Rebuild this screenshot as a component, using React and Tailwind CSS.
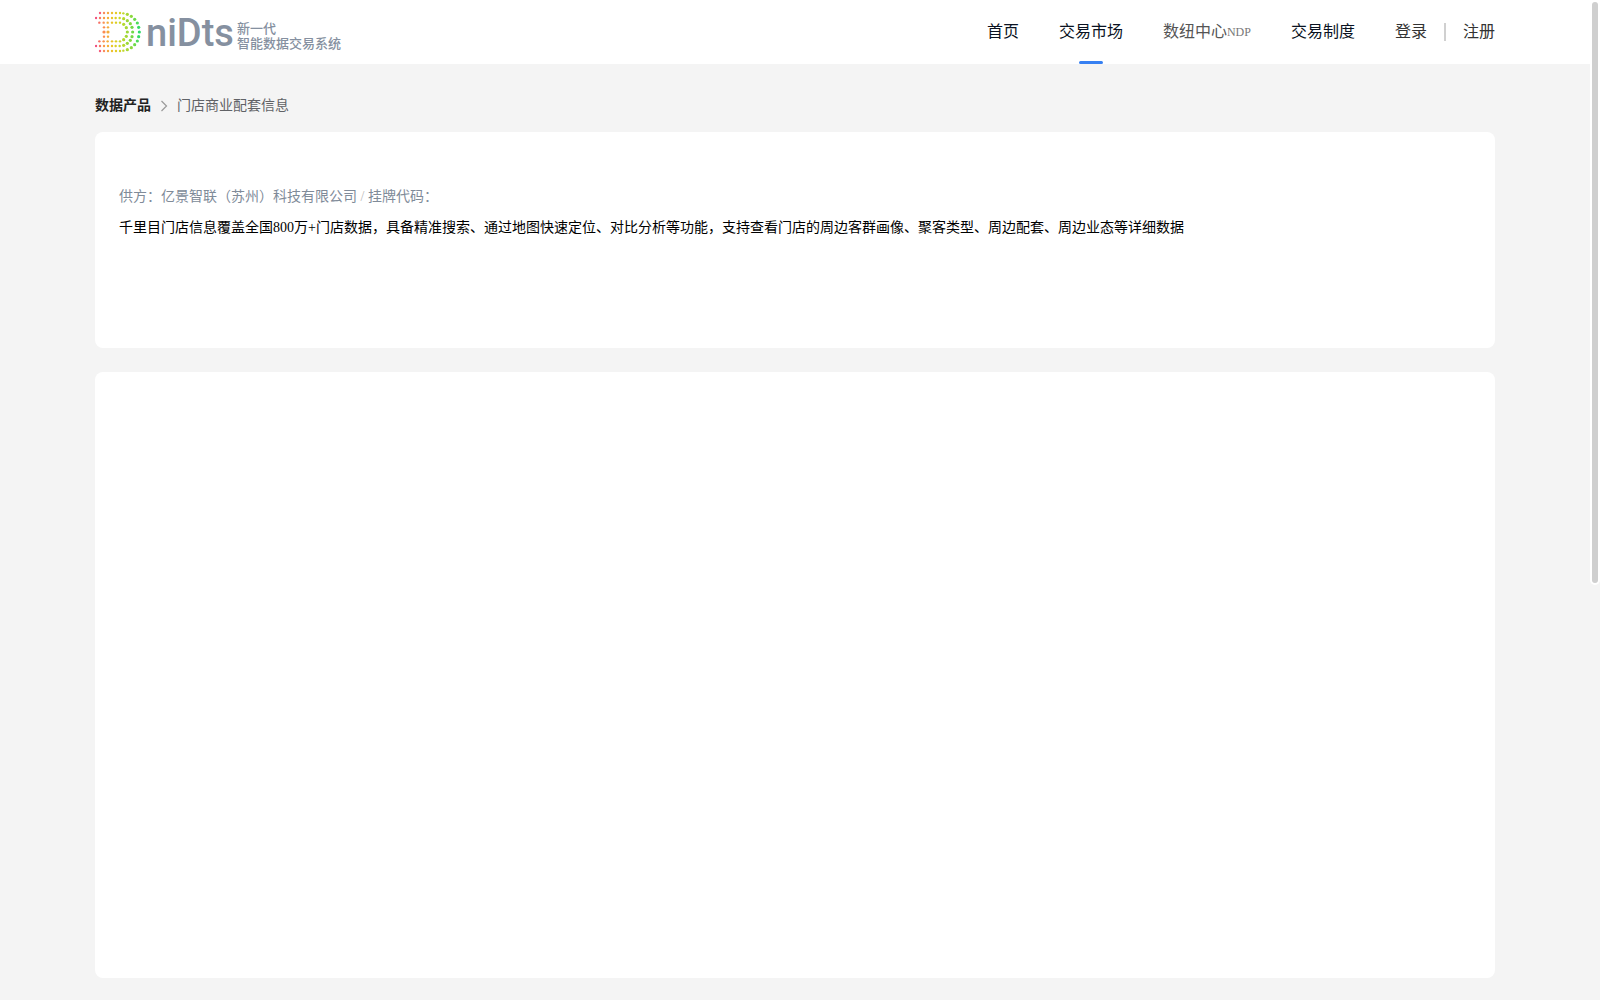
const NAV_ITEMS = [
  { label: '首页' },
  { label: '交易市场', active: true },
  { label: '数纽中心', suffix: 'NDP', muted: true },
  { label: '交易制度' },
];

// upper half of the dotted "D", mirrored around y = 72
const DOTS = [
  [24, 15, '#f45d7c'], [36, 15, '#f98a5b'], [48, 15, '#f6a83e'], [60, 15, '#eebf2c'], [72, 15, '#e3cb24'], [84, 15, '#d3d426'], [94, 16, '#c0d72c'],
  [106, 19, '#a8d833'], [118, 25, '#8cd83d'], [128, 34, '#6cda49'], [136, 45, '#4ddc58'], [140, 58, '#36dc63'],
  [12, 30, '#f0507e'], [24, 30, '#f8775f'], [36, 30, '#f99a48'], [48, 30, '#f5b235'], [60, 30, '#e9c626'], [71, 30, '#dccf22'], [83, 30, '#c9d727'],
  [95, 32, '#b5d92e'], [106, 38, '#9bd736'], [115, 47, '#85d83e'], [120, 58, '#74d845'],
  [22, 44, '#f67065'], [35, 44, '#f98f50'], [47, 44, '#f4ae38'], [60, 44, '#e9c328'], [72, 44, '#dacf22'], [84, 44, '#c9d727'],
  [95, 49, '#b4d92e'], [103, 59, '#a3d833'],
  [36, 58, '#fb8b50'], [48, 58, '#f4ac3a'],
];

const CENTER_DOTS = [
  [142, 72, '#2edb68'], [122, 72, '#70d947'], [106, 72, '#9cd836'], [36, 72, '#fb8b50'], [48, 72, '#f4ac3a'],
];

function LogoMark() {
  return (
    <svg width="49" height="48" viewBox="9 0 147 144" aria-hidden="true">
      {DOTS.map(([x, y, color]) => (
        <g key={`${x}-${y}`} fill={color}>
          <circle cx={x} cy={y} r={x > 94 ? 4.8 : 3.6} />
          <circle cx={x} cy={144 - y} r={x > 94 ? 4.8 : 3.6} />
        </g>
      ))}
      {CENTER_DOTS.map(([x, y, color]) => (
        <circle key={x} cx={x} cy={y} r="4.8" fill={color} />
      ))}
    </svg>
  );
}

function Header() {
  return (
    <header className="bg-white">
      <div className="mx-auto flex h-16 max-w-[1400px] items-center justify-between">
        <a href="#" className="flex items-center text-[#8590a0]">
          <LogoMark />
          <span className="ml-[2px] w-[87px] pt-[2px] font-['Roboto',sans-serif] text-[38px] leading-[48px] font-medium">
            niDts
          </span>
          <span className="ml-1 flex flex-col pt-[5px] font-['Noto_Sans_CJK_SC',sans-serif] text-[13px] leading-[15px] font-medium whitespace-nowrap">
            <span>新一代</span>
            <span>智能数据交易系统</span>
          </span>
        </a>

        <nav className="flex h-full items-center gap-10 text-[16px]">
          {NAV_ITEMS.map((item) => (
            <a
              key={item.label}
              href="#"
              className={`relative flex h-full items-center whitespace-nowrap ${item.muted ? 'text-[#555555]' : 'text-[#0a1222]'}`}
            >
              {item.label}
              {item.suffix && (
                <span className="font-['Liberation_Serif',serif] text-[12px] text-[#777777]">{item.suffix}</span>
              )}
              {item.active && (
                <span className="absolute bottom-0 left-1/2 h-[3px] w-6 -translate-x-1/2 rounded-xs bg-[#3680f2]" />
              )}
            </a>
          ))}
          <div className="flex items-center text-[#333333]">
            <a href="#">登录</a>
            <span className="mx-[17px] h-[18px] w-[2px] bg-[#d0d0d0]" />
            <a href="#">注册</a>
          </div>
        </nav>
      </div>
    </header>
  );
}

function Breadcrumb() {
  return (
    <nav className="flex h-[68px] items-center pt-4 text-[14px] leading-5" aria-label="breadcrumb">
      <a href="#" className="font-bold text-[#222222]">数据产品</a>
      <svg className="mx-2" width="10" height="12" viewBox="0 0 10 12" fill="none" stroke="#999999" strokeWidth="1.2">
        <path d="M2.5 1 7.5 6l-5 5" />
      </svg>
      <span className="text-[#606266]">门店商业配套信息</span>
    </nav>
  );
}

export default function App() {
  return (
    <div className="flex min-h-screen bg-[#f4f4f4] font-['Liberation_Serif','Noto_Sans_CJK_SC',serif]">
      <div className="min-w-0 flex-1">
        <Header />
        <main className="mx-auto max-w-[1400px] pb-[22px]">
          <Breadcrumb />
          <section className="min-h-[216px] rounded-lg bg-white px-6 pt-[55px] text-[14px]">
            <p className="leading-5 text-[#808b99]">
              供方：亿景智联（苏州）科技有限公司 <span className="text-[#bbbbbb]">/</span> 挂牌代码：
            </p>
            <p className="mt-[11px] leading-5 text-black">
              千里目门店信息覆盖全国800万+门店数据，具备精准搜索、通过地图快速定位、对比分析等功能，支持查看门店的周边客群画像、聚客类型、周边配套、周边业态等详细数据
            </p>
          </section>
          <section className="mt-6 min-h-[606px] rounded-lg bg-white" />
        </main>
      </div>

      {/* scrollbar */}
      <div className="w-[10px] shrink-0">
        <div className="h-[585px] rounded-b-full bg-white p-[2px]">
          <div className="h-full rounded-full bg-[#cfcfcf]" />
        </div>
      </div>
    </div>
  );
}
